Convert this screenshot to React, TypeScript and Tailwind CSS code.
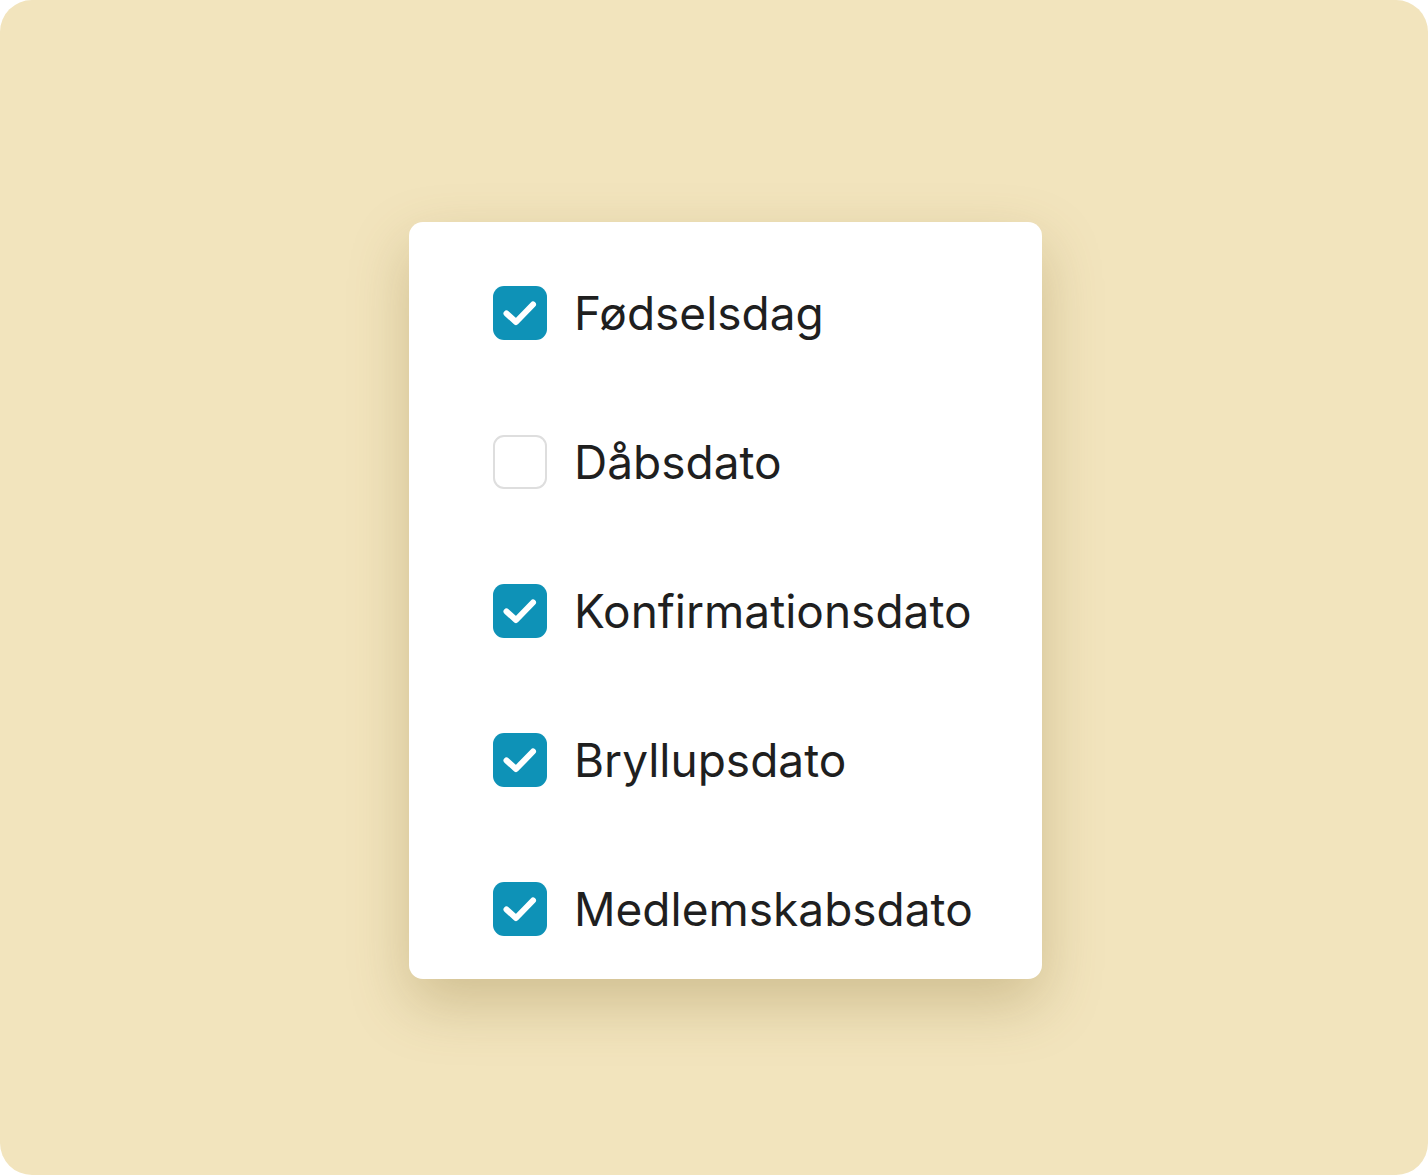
const items = [
  { label: 'Fødselsdag', checked: true },
  { label: 'Dåbsdato', checked: false },
  { label: 'Konfirmationsdato', checked: true },
  { label: 'Bryllupsdato', checked: true },
  { label: 'Medlemskabsdato', checked: true },
];

function Box({ checked }: { checked: boolean }) {
  if (!checked) {
    return <div className="h-[54px] w-[54px] shrink-0 rounded-[11px] border-2 border-[#dedede] bg-white" />;
  }
  return (
    <div className="h-[54px] w-[54px] shrink-0 rounded-[11px] bg-[#0e92b7]">
      <svg width="54" height="54" viewBox="0 0 54 54" fill="none">
        <path d="M13.5 27.5l9.5 8.5L40 18.5" stroke="white" strokeWidth="6" strokeLinecap="round" strokeLinejoin="round" />
      </svg>
    </div>
  );
}

export default function App() {
  return (
    <div className="bg-white">
      <div className="flex h-[1175px] w-[1428px] items-start rounded-[32px] bg-[#f2e4bd] pl-[409px] pt-[222px]">
        <div className="flex h-[757px] w-[633px] flex-col gap-[95px] rounded-[14px] bg-white pl-[84px] pt-[64px] shadow-[0_24px_60px_rgba(120,95,30,0.28)]">
          {items.map((item) => (
            <label key={item.label} className="flex h-[54px] items-center gap-[27px]">
              <Box checked={item.checked} />
              <span className="text-[46px] leading-none text-[#1f1f1f] [font-family:Inter,'Noto_Sans',sans-serif]">
                {item.label}
              </span>
            </label>
          ))}
        </div>
      </div>
    </div>
  );
}
